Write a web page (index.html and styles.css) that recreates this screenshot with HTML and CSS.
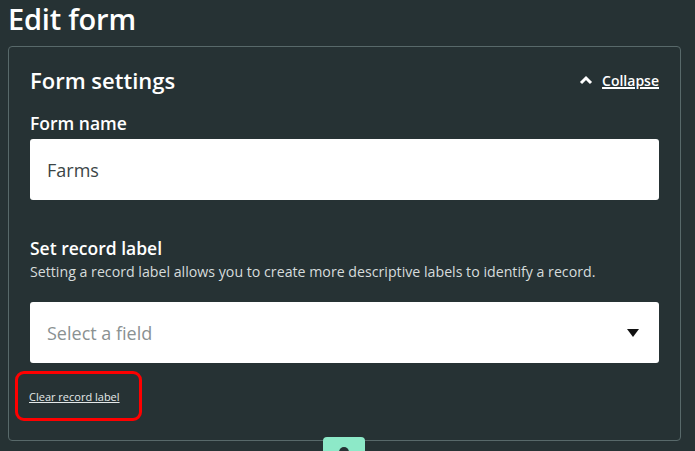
FILE: index.html
```html
<!DOCTYPE html>
<html>
<head>
<meta charset="utf-8">
<link rel="stylesheet" href="styles.css">
</head>
<body>
<div class="page">
  <h1 class="title">Edit form</h1>
  <section class="card">
    <div class="card-head">
      <h2 class="card-title">Form settings</h2>
      <a class="collapse" href="#">
        <svg class="chev" width="14" height="10" viewBox="0 0 14 10"><path d="M2 8 L7 3 L12 8" fill="none" stroke="#fff" stroke-width="3"/></svg>
        <span class="collapse-text">Collapse</span>
      </a>
    </div>
    <div class="field">
      <label class="label">Form name</label>
      <div class="input">Farms</div>
    </div>
    <div class="field field-record">
      <label class="label">Set record label</label>
      <p class="desc">Setting a record label allows you to create more descriptive labels to identify a record.</p>
      <div class="input select"><span class="placeholder">Select a field</span><span class="caret"></span></div>
    </div>
    <div class="clear-wrap">
      <a class="clear" href="#">Clear record label</a>
    </div>
  </section>
  <div class="fab"><span class="fab-dot"></span></div>
</div>
</body>
</html>
```
FILE: styles.css
```css
html, body {
  margin: 0;
  padding: 0;
  background: #263234;
  height: 100%;
  overflow: hidden;
}
.page {
  padding: 0 14px 0 8px;
  font-family: "Open Sans", "Liberation Sans", sans-serif;
  color: #fff;
  position: relative;
}
.title {
  margin: 0;
  font-size: 29px;
  font-weight: 600;
  line-height: 38px;
  letter-spacing: -0.2px;
}
.card {
  margin-top: 8px;
  border: 1px solid #58696a;
  border-radius: 4px;
  padding: 17px 21px 19px 21px;
  height: 357px;
}
.card-head {
  display: flex;
  justify-content: space-between;
  align-items: center;
  height: 32px;
}
.card-title {
  margin: 0;
  font-size: 22px;
  font-weight: 600;
}
.collapse {
  display: flex;
  align-items: center;
  gap: 9px;
  color: #fff;
  font-size: 14px;
  font-weight: 600;
}
.collapse-text { text-decoration: underline; text-underline-offset: 2px; }
.field { margin-top: 16px; }
.label {
  display: block;
  font-size: 17.5px;
  font-weight: 600;
  line-height: 22px;
}
.input {
  margin-top: 5px;
  background: #fff;
  border-radius: 3px;
  height: 61px;
  box-sizing: border-box;
  display: flex;
  align-items: center;
  padding: 0 17px;
  color: #3b4546;
  font-size: 18px;
}
.field-record { margin-top: 37px; }
.desc {
  margin: 4px 0 0;
  font-size: 14.2px;
  color: #d6dcdc;
  line-height: 18px;
}
.select { margin-top: 21px; justify-content: space-between; padding-right: 20px; }
.placeholder { color: #8a9192; }
.caret {
  width: 0; height: 0;
  border-left: 6px solid transparent;
  border-right: 6px solid transparent;
  border-top: 8px solid #111;
}
.clear-wrap {
  margin-top: 8px;
  margin-left: -15px;
  width: 110px;
  height: 44px;
  border: 3px solid #f00;
  border-radius: 9px;
  display: flex;
  align-items: center;
  padding-left: 11px;
}
.clear {
  color: #e4e9e9;
  font-size: 11px;
  text-decoration: underline;
}
.fab {
  position: absolute;
  left: 323px;
  top: 437px;
  width: 42px;
  height: 30px;
  background: #8de9c8;
  border-radius: 4px;
  display: flex;
  justify-content: center;
}
.fab-dot {
  margin-top: 10px;
  width: 10px;
  height: 10px;
  border-radius: 50%;
  background: #263234;
}
```
